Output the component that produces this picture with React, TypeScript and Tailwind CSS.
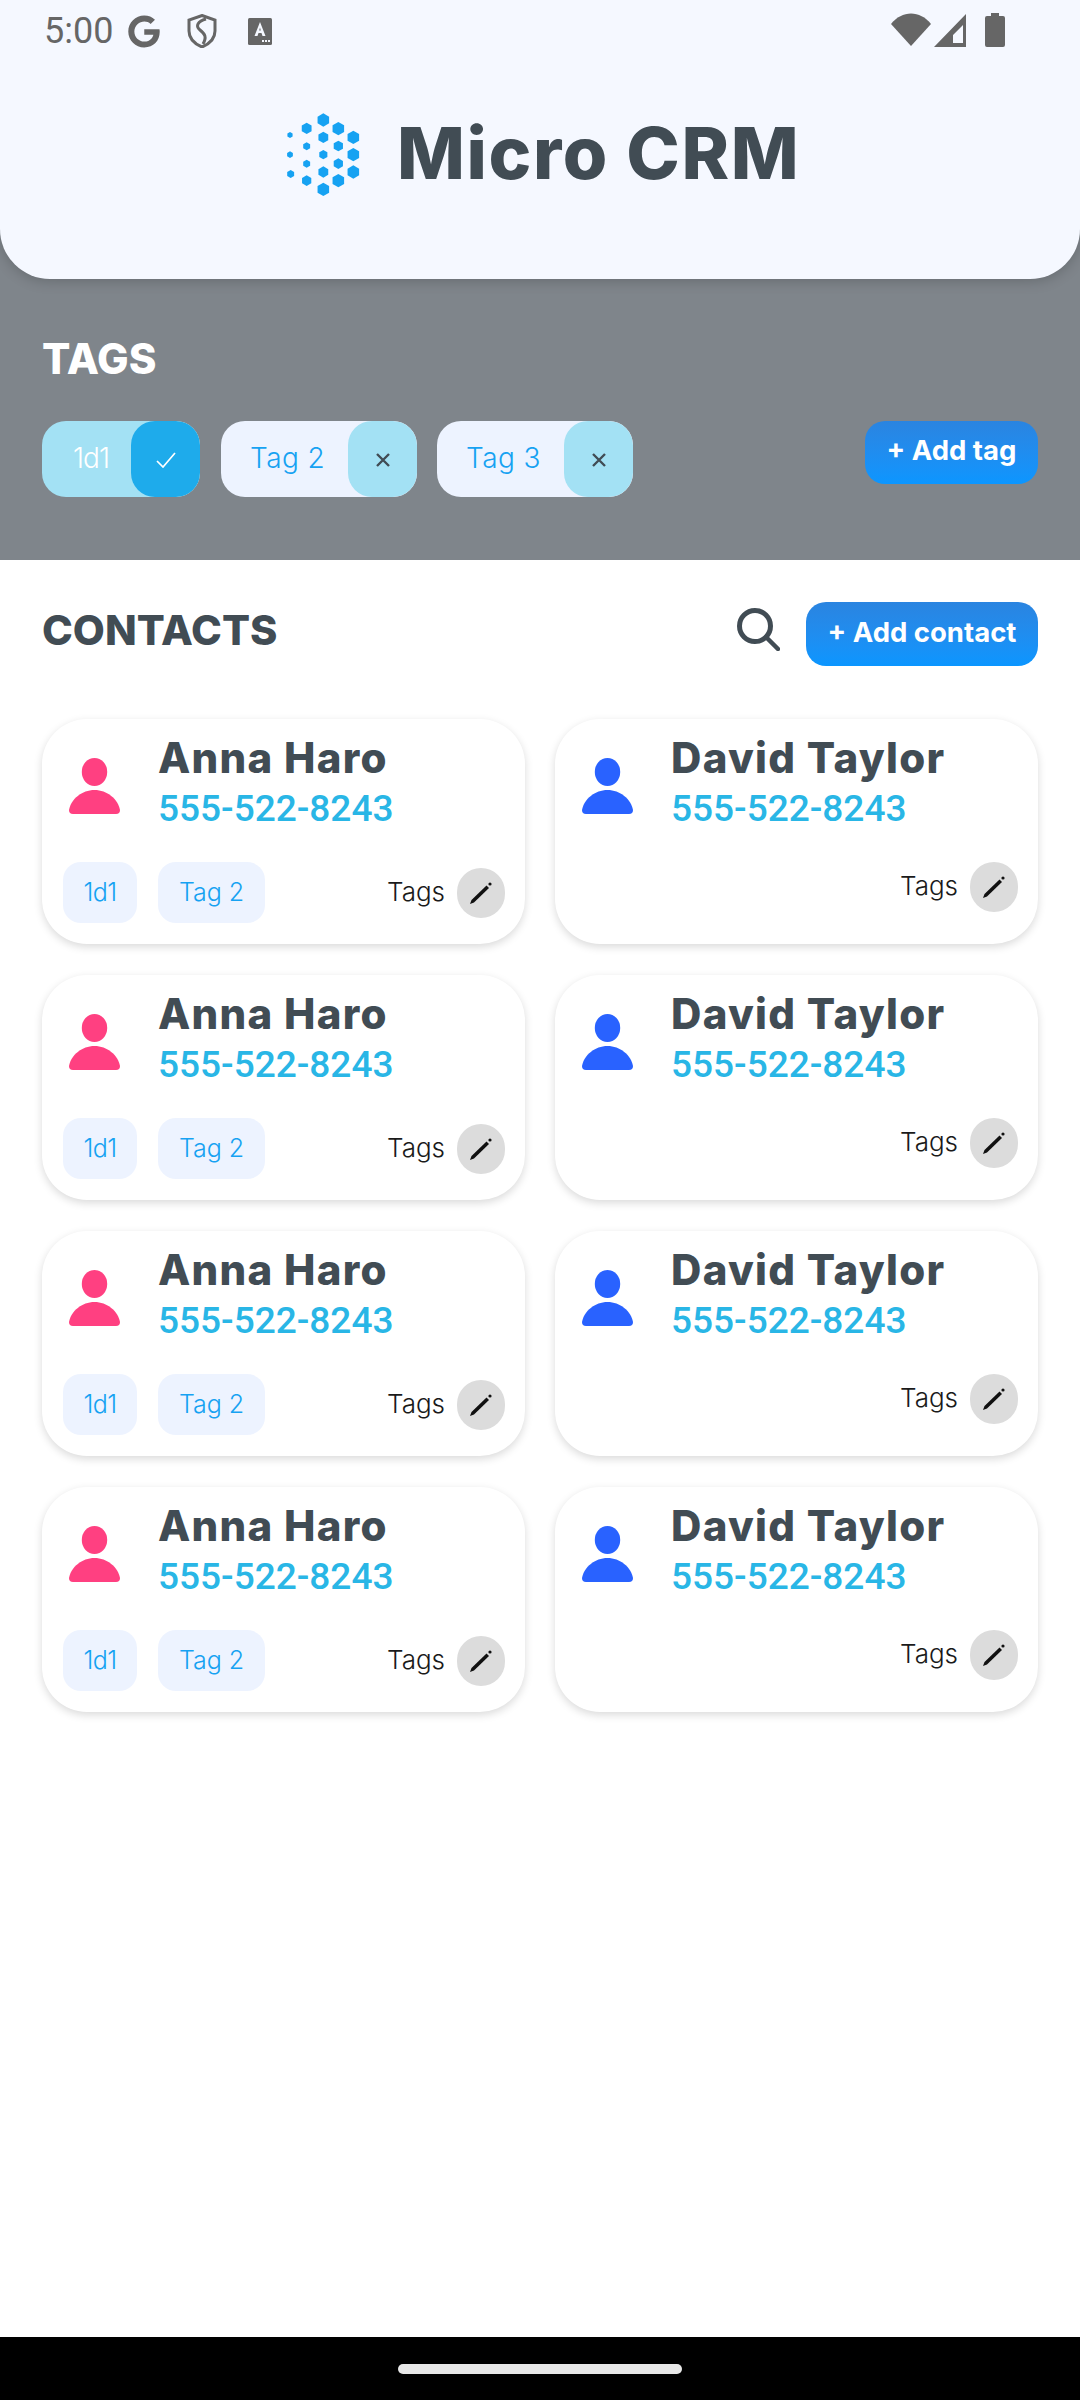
import React from "react";
import { FaGoogle } from "react-icons/fa";

const hexes: [number, number, number][] = [
  [160,60,20],[205,86,20],[250,112,20],[110,85,17],[160,112,17],[205,138,16],[250,164,20],[60,105,9],[110,139,12],[160,164,14],[205,191,16],[250,216,20],[60,164,10],[110,191,12],[160,216,17],[205,242,20],[62,222,12],[110,242,16],[160,268,20],
];

function hexPoints(x: number, y: number, r: number) {
  const k = r * 0.866;
  return `${x},${y - r} ${x + k},${y - r / 2} ${x + k},${y + r / 2} ${x},${y + r} ${x - k},${y + r / 2} ${x - k},${y - r / 2}`;
}

function Logo() {
  return (
    <svg viewBox="0 0 330 330" className="w-[110px] h-[110px] shrink-0">
      {hexes.map(([x, y, r], i) => (
        <polygon key={i} points={hexPoints(x, y, r)} fill="#16a2f2" />
      ))}
    </svg>
  );
}

function StatusBar() {
  return (
    <div className="h-[62px] flex items-start justify-between pl-[44px] pr-[75px] pt-[13px] text-[#666666]">
      <div className="flex items-center">
        <span className="text-[36px] leading-[36px] w-[84px]" style={{ fontFamily: "Roboto, sans-serif" }}>5:00</span>
        <FaGoogle className="w-[32px] h-[33px]" />
        <svg viewBox="0 0 30 34" className="w-[30px] h-[34px] ml-[27px]">
          <path d="M15 1.5 L28 6 V17 C28 25 22 30 15 33 C8 30 2 25 2 17 V6 Z" fill="none" stroke="#666" strokeWidth="3" />
          <path d="M19 5 C11 7 8 12 13 16 C18 20 20 23 16 30" fill="none" stroke="#666" strokeWidth="3" />
        </svg>
        <svg viewBox="0 0 24 27" className="w-[24px] h-[27px] ml-[31px]">
          <rect width="24" height="27" rx="1.5" fill="#666" />
          <path fillRule="evenodd" d="M12 4 L6.5 18 H9.5 L10.5 15 H13.5 L14.5 18 H17.5 Z M11.2 12.5 H12.8 L12 9.5 Z" fill="#f5f8ff" />
          <path d="M14 22h2v2h-2zM17 22h2v2h-2zM20 22h2v2h-2z" fill="#f5f8ff" />
        </svg>
      </div>
      <div className="flex items-center">
        <svg viewBox="0 0 40 34" className="w-[40px] h-[34px]">
          <path d="M0 11 C11 -3 29 -3 40 11 L20 33 Z" fill="#666" />
        </svg>
        <svg viewBox="0 0 32 33" className="w-[32px] h-[33px] ml-[3px]">
          <path fillRule="evenodd" d="M0 33 L32 0 V33 Z M19 29 H29 V11 L19 21 Z" fill="#666" />
        </svg>
        <svg viewBox="0 0 20 34" className="w-[20px] h-[34px] ml-[19px]">
          <path d="M6 0 H14 V3 H18 Q20 3 20 5 V32 Q20 34 18 34 H2 Q0 34 0 32 V5 Q0 3 2 3 H6 Z" fill="#666" />
        </svg>
      </div>
    </div>
  );
}

function Header() {
  return (
    <header className="relative z-10 h-[279px] bg-[#f5f8ff] rounded-b-[50px] shadow-[0_2px_14px_rgba(0,0,0,0.2)]">
      <StatusBar />
      <div className="flex items-center h-[110px] mt-[38px] pl-[270px]">
        <Logo />
        <span className="ml-[17px] pb-[4px] text-[#414c54] text-[72px] leading-none font-extrabold tracking-[1.6px] whitespace-nowrap" style={{ fontFamily: "Inter, sans-serif" }}>Micro CRM</span>
      </div>
    </header>
  );
}

function FilterChip({ label, active, className = "" }: { label: string; active?: boolean; className?: string }) {
  return (
    <div className={`flex h-[76px] rounded-[24px] overflow-hidden ${active ? "w-[158px] bg-[#a3e1f4]" : "w-[196px] bg-[#edf3ff]"} ${className}`}>
      <span className={`flex-1 flex items-center text-[28px] pb-[2px] ${active ? "text-white pl-[31px] tracking-[-1px]" : "text-[#16a2f2] pl-[29px] tracking-[0.4px]"}`} style={{ fontFamily: "Inter, sans-serif", fontWeight: 300 }}>{label}</span>
      <span className={`w-[69px] rounded-[24px] flex items-center justify-center ${active ? "bg-[#1eabeb]" : "bg-[#a3e1f4]"}`}>
        {active ? (
          <svg viewBox="0 0 20 16" className="w-[20px] h-[16px] mt-[2px]"><path d="M1 9 L7 15 L19 1" fill="none" stroke="#fff" strokeWidth="1.7" /></svg>
        ) : (
          <svg viewBox="0 0 14 14" className="w-[14px] h-[14px] mt-[2px]"><path d="M1 1 L13 13 M13 1 L1 13" fill="none" stroke="#414c54" strokeWidth="2.4" /></svg>
        )}
      </span>
    </div>
  );
}

function Person({ color }: { color: string }) {
  return (
    <svg viewBox="0 0 51 56" className="w-[51px] h-[56px] shrink-0">
      <ellipse cx="25.5" cy="14" rx="12.7" ry="14" fill={color} />
      <path d="M0 52 C2 41 13 32 25.5 32 C38 32 49 41 51 52 Q51 56 47 56 H4 Q0 56 0 52 Z" fill={color} />
    </svg>
  );
}

function EditButton() {
  return (
    <span className="w-[48px] h-[50px] rounded-full bg-[#dcdcdc] flex items-center justify-center">
      <svg viewBox="0 0 24 24" className="w-[24px] h-[24px]">
        <path d="M1 23 L2.5 19 L17.5 4.5 L20 7 L5 21.5 Z" fill="#111" />
        <circle cx="21" cy="3" r="1.6" fill="#111" />
      </svg>
    </span>
  );
}

function TagPill({ label, w, tight }: { label: string; w: string; tight?: boolean }) {
  return (
    <span className={`${w} h-[61px] rounded-[18px] bg-[#edf3ff] text-[#16a2f2] text-[25px] flex items-center justify-center ${tight ? "tracking-[-0.5px]" : ""}`} style={{ fontFamily: "Inter, sans-serif", fontWeight: 300 }}>{label}</span>
  );
}

function TagsLabel({ up }: { up: string }) {
  return (
    <span className={`text-[26px] text-[#1a1a1a] font-light ${up}`} style={{ fontFamily: "Inter, sans-serif" }}>Tags</span>
  );
}

function Card({ name, color, tags }: { name: string; color: string; tags: boolean }) {
  return (
    <div className="h-[225px] rounded-[45px] bg-white shadow-[0_3px_8px_rgba(0,0,0,0.15)] pl-[27px] pr-[20px] flex flex-col">
      <div className="flex items-center h-[133px] shrink-0">
        <Person color={color} />
        <div className="ml-[38px] flex flex-col -mt-[5px]">
          <span className="text-[#414c54] text-[42px] leading-[50px] font-extrabold tracking-[1.3px] whitespace-nowrap" style={{ fontFamily: "Inter, sans-serif" }}>{name}</span>
          <span className="text-[#29b6e6] text-[37px] leading-[48px] font-medium mt-[2px]" style={{ fontFamily: "Roboto, sans-serif" }}>555-522-8243</span>
        </div>
      </div>
      {tags ? (
        <div className="flex items-center justify-between -ml-[6px] mt-[10px]">
          <div className="flex gap-[21px]">
            <TagPill label="1d1" w="w-[74px]" tight />
            <TagPill label="Tag 2" w="w-[107px]" />
          </div>
          <div className="flex items-center gap-[12px]">
            <TagsLabel up="mb-[2px]" />
            <EditButton />
          </div>
        </div>
      ) : (
        <div className="flex items-center justify-end gap-[12px] mt-[10px]">
          <TagsLabel up="mb-[4px]" />
          <EditButton />
        </div>
      )}
    </div>
  );
}

export default function App() {
  const rows = [0, 1, 2, 3];
  return (
    <div className="w-[1080px] h-[2400px] bg-white flex flex-col overflow-hidden">
      <Header />
      <section className="-mt-[50px] h-[331px] bg-[#7f858b] px-[42px] pt-[108px]">
        <h2 className="text-white text-[42px] leading-[44px] font-extrabold" style={{ fontFamily: "Inter, sans-serif" }}>TAGS</h2>
        <div className="flex justify-between mt-[40px]">
          <div className="flex gap-[21px]">
            <FilterChip label="1d1" active />
            <FilterChip label="Tag 2" />
            <FilterChip label="Tag 3" className="-ml-px" />
          </div>
          <button className="w-[173px] h-[63px] pb-[3px] rounded-[20px] bg-gradient-to-b from-[#2a84e0] to-[#0a96ff] text-white text-[27.5px] font-bold" style={{ fontFamily: "Inter, sans-serif" }}>+ Add tag</button>
        </div>
      </section>
      <section className="flex-1 px-[42px] pt-[42px] flex flex-col">
        <div className="flex items-start justify-between h-[64px]">
          <h2 className="text-[#414c54] text-[41.5px] leading-[56px] font-extrabold" style={{ fontFamily: "Inter, sans-serif" }}>CONTACTS</h2>
          <div className="flex items-start gap-[26px]">
            <svg viewBox="0 0 43 43" className="w-[43px] h-[43px] mt-[6px]">
              <circle cx="18" cy="18" r="15.5" fill="none" stroke="#414c54" strokeWidth="5" />
              <path d="M29 29 L41 41" stroke="#414c54" strokeWidth="4.5" strokeLinecap="round" />
            </svg>
            <button className="w-[232px] h-[64px] pb-[2px] rounded-[20px] bg-gradient-to-b from-[#2a84e0] to-[#0a96ff] text-white text-[27.5px] font-bold" style={{ fontFamily: "Inter, sans-serif" }}>+ Add contact</button>
          </div>
        </div>
        <div className="grid grid-cols-2 gap-x-[30px] gap-y-[31px] mt-[53px]">
          {rows.map((r) => (
            <React.Fragment key={r}>
              <Card name="Anna Haro" color="#ff4081" tags />
              <Card name="David Taylor" color="#2962ff" tags={false} />
            </React.Fragment>
          ))}
        </div>
      </section>
      <div className="h-[63px] bg-black flex items-center justify-center">
        <span className="w-[284px] h-[10px] rounded-full bg-[#e8e8e8]" />
      </div>
    </div>
  );
}
